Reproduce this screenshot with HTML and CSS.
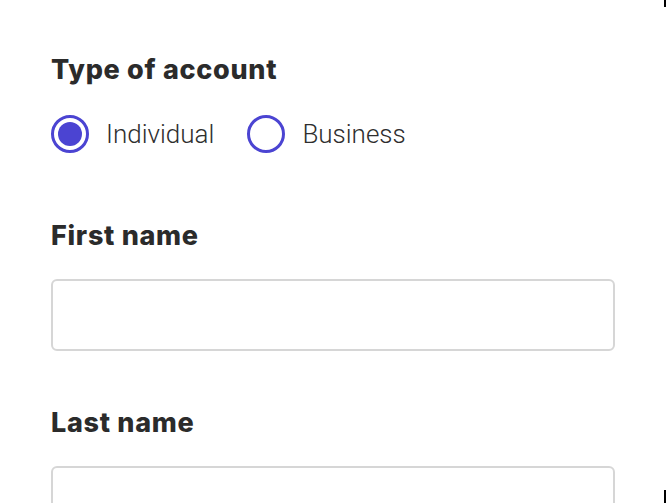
FILE: index.html
```html
<!DOCTYPE html>
<html lang="en">
<head>
<meta charset="utf-8">
<title>Account form</title>
<link rel="stylesheet" href="styles.css">
</head>
<body>
<form class="form">
  <fieldset class="group">
    <legend class="label">Type of account</legend>
    <div class="radios">
      <label class="radio">
        <span class="dot checked"></span>
        <span class="radio-text">Individual</span>
      </label>
      <label class="radio">
        <span class="dot"></span>
        <span class="radio-text">Business</span>
      </label>
    </div>
  </fieldset>
  <div class="field first">
    <label class="label" for="fn">First name</label>
    <input class="input" id="fn" type="text">
  </div>
  <div class="field">
    <label class="label" for="ln">Last name</label>
    <input class="input" id="ln" type="text">
  </div>
</form>
<div class="edge edge-top"></div>
<div class="edge edge-bottom"></div>
</body>
</html>
```
FILE: styles.css
```css
html, body {
  margin: 0;
  padding: 0;
  background: #fff;
  overflow: hidden;
}
body {
  width: 666px;
  height: 503px;
  position: relative;
  font-family: Inter, "Liberation Sans", sans-serif;
  color: #2b2b2b;
}
.form {
  display: flex;
  flex-direction: column;
  padding: 54px 51px 0 51px;
}
.group {
  border: 0;
  margin: 0;
  padding: 0;
  display: flex;
  flex-direction: column;
}
.label {
  display: block;
  padding: 0;
  font-family: Inter, "Liberation Sans", sans-serif;
  font-weight: 800;
  font-size: 27px;
  line-height: 32px;
  color: #2b2b2b;
  letter-spacing: 0.7px;
  margin-bottom: 29px;
}
.radios {
  display: flex;
  gap: 33px;
}
.radio {
  display: flex;
  align-items: center;
  gap: 17px;
}
.dot {
  box-sizing: border-box;
  width: 38px;
  height: 38px;
  border: 3px solid #4b44d2;
  border-radius: 50%;
  background: #fff;
  display: flex;
  align-items: center;
  justify-content: center;
}
.dot.checked::before {
  content: "";
  width: 24px;
  height: 24px;
  border-radius: 50%;
  background: #4b44d2;
}
.radio-text {
  font-family: Roboto, "Liberation Sans", sans-serif;
  font-weight: 300;
  font-size: 26px;
  color: #2e2e2e;
}
.field {
  display: flex;
  flex-direction: column;
  margin-top: 56px;
}
.field.first {
  margin-top: 67px;
}
.field .label {
  margin-bottom: 27px;
}
.input {
  box-sizing: border-box;
  width: 564px;
  height: 72px;
  border: 2px solid #d6d6d6;
  border-radius: 6px;
  background: #fff;
  margin: 0;
}
.edge {
  position: absolute;
  right: 0;
  width: 2px;
  background: #000;
}
.edge-top {
  top: 0;
  height: 7px;
}
.edge-bottom {
  bottom: 0;
  height: 13px;
}
```
